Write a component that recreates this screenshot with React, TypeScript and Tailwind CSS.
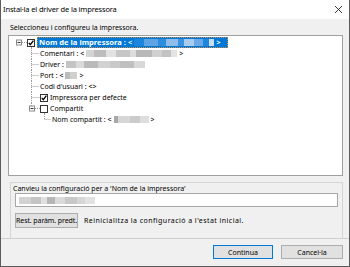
const FONT = "font-['Noto_Sans','Liberation_Sans',sans-serif]";

// pixelated "blurred" value blocks
function Blur({ parts }: { parts: string[] }) {
  return (
    <span className="inline-flex h-[7px] items-stretch">
      {parts.map((c, i) => (
        <span key={i} className={c} />
      ))}
    </span>
  );
}

const dot = { stroke: "#9a9a9a", strokeWidth: 1, strokeDasharray: "1 1" };

function ExpandBox({ x, y }: { x: number; y: number }) {
  return (
    <g>
      <rect x={x + 0.5} y={y + 0.5} width={5} height={5} fill="#fff" stroke="#8a8a8a" />
      <line x1={x + 1.5} y1={y + 3} x2={x + 4.5} y2={y + 3} stroke="#333" />
    </g>
  );
}

function Check({ x, checked }: { x: number; checked?: boolean }) {
  return (
    <g>
      <rect x={x + 0.5} y={2.5} width={7} height={7} fill="#fff" stroke="#333" />
      {checked && (
        <path d={`M${x + 1.8} ${5.8} L${x + 3.3} ${7.6} L${x + 6.4} ${3.6}`} fill="none" stroke="#000" strokeWidth={1.3} />
      )}
    </g>
  );
}

function Row({ guide, width, children }: { guide: React.ReactNode; width: number; children: React.ReactNode }) {
  return (
    <div className="flex h-[11px] items-center">
      <svg width={width} height={11} className="shrink-0">
        {guide}
      </svg>
      {children}
    </div>
  );
}

const V = 22.5;

export default function App() {
  return (
    <div className={`flex h-[267px] w-[350px] flex-col overflow-hidden border-x border-b border-[#5b5b5b] bg-[#f0f0f0] text-black ${FONT}`}>
      {/* title bar */}
      <div className="flex h-[19px] shrink-0 items-center justify-between bg-white pl-[2px] pr-[6px]">
        <span className="text-[7.5px] leading-none tracking-[-0.15px]">Instal·la el driver de la impressora</span>
        <svg width="9" height="9" viewBox="0 0 9 9">
          <path d="M1 1 L8 8 M8 1 L1 8" stroke="#222" strokeWidth="0.9" />
        </svg>
      </div>

      <div className="flex flex-col pl-[7px] pr-[6px]">
        <div className="flex h-[16px] items-center pl-[2px] text-[7px] leading-none">
          Seleccioneu i configureu la impressora.
        </div>

        {/* tree view */}
        <div className="h-[141px] border border-[#a0a0a0] bg-white pt-[1px] text-[7px] leading-none">
          <Row
            width={28}
            guide={
              <>
                <ExpandBox x={7} y={2.5} />
                <line x1={13} y1={5.5} x2={18} y2={5.5} {...dot} />
                <Check x={18} checked />
                <line x1={V} y1={10} x2={V} y2={11} {...dot} />
              </>
            }
          >
            <div className="flex h-[11px] w-[191px] items-center gap-[2px] border border-dotted border-[#d08b4a] bg-[#0078d7] pl-[1px] text-[7.6px] font-bold text-white">
              <span>Nom de la impressora : &lt;</span>
              <Blur parts={["w-[10px] bg-[#1c86dc]", "w-[14px] bg-[#5ea3e4]", "w-[8px] bg-[#2e8ddd]", "w-[12px] bg-[#8fbde9]", "w-[6px] bg-[#3a93df]", "w-[10px] bg-[#a9cbee]", "w-[9px] bg-[#6aa9e5]", "w-[6px] bg-[#1f87db]", "w-[5px] bg-[#c7dcf2]"]} />
              <span>&gt;</span>
            </div>
          </Row>

          <Row width={31} guide={<><line x1={V} y1={0} x2={V} y2={11} {...dot} /><line x1={V} y1={5.5} x2={30} y2={5.5} {...dot} /></>}>
            <span className="flex items-center gap-[2px]">
              Comentari : &lt;
              <Blur parts={["w-[8px] bg-[#d4d4d4]", "w-[12px] bg-[#bdbdbd]", "w-[10px] bg-[#e2e2e2]", "w-[14px] bg-[#c6c6c6]", "w-[6px] bg-[#dcdcdc]", "w-[16px] bg-[#b8b8b8]", "w-[10px] bg-[#d0d0d0]", "w-[9px] bg-[#c2c2c2]", "w-[6px] bg-[#e4e4e4]"]} />
              &gt;
            </span>
          </Row>

          <Row width={31} guide={<><line x1={V} y1={0} x2={V} y2={11} {...dot} /><line x1={V} y1={5.5} x2={30} y2={5.5} {...dot} /></>}>
            <span className="flex items-center gap-[2px]">
              Driver :
              <Blur parts={["w-[10px] bg-[#c4c4c4]", "w-[8px] bg-[#dadada]", "w-[14px] bg-[#bababa]", "w-[12px] bg-[#d2d2d2]", "w-[10px] bg-[#c8c8c8]", "w-[14px] bg-[#bfbfbf]", "w-[11px] bg-[#d8d8d8]"]} />
            </span>
          </Row>

          <Row width={31} guide={<><line x1={V} y1={0} x2={V} y2={11} {...dot} /><line x1={V} y1={5.5} x2={30} y2={5.5} {...dot} /></>}>
            <span className="flex items-center gap-[2px]">
              Port : &lt;
              <Blur parts={["w-[5px] bg-[#bcbcbc]", "w-[7px] bg-[#d0d0d0]"]} />
              &gt;
            </span>
          </Row>

          <Row width={31} guide={<><line x1={V} y1={0} x2={V} y2={11} {...dot} /><line x1={V} y1={5.5} x2={30} y2={5.5} {...dot} /></>}>
            <span>Codi d'usuari : &lt;&gt;</span>
          </Row>

          <Row
            width={41}
            guide={
              <>
                <line x1={V} y1={0} x2={V} y2={11} {...dot} />
                <line x1={V} y1={5.5} x2={31} y2={5.5} {...dot} />
                <Check x={31} checked />
              </>
            }
          >
            <span>Impressora per defecte</span>
          </Row>

          <Row
            width={41}
            guide={
              <>
                <line x1={V} y1={0} x2={V} y2={3} {...dot} />
                <ExpandBox x={20} y={2.5} />
                <line x1={26} y1={5.5} x2={31} y2={5.5} {...dot} />
                <Check x={31} />
                <line x1={35.5} y1={10} x2={35.5} y2={11} {...dot} />
              </>
            }
          >
            <span>Compartit</span>
          </Row>

          <Row width={43} guide={<><line x1={35.5} y1={0} x2={35.5} y2={5.5} {...dot} /><line x1={35.5} y1={5.5} x2={42} y2={5.5} {...dot} /></>}>
            <span className="flex items-center gap-[2px]">
              Nom compartit : &lt;
              <Blur parts={["w-[4px] bg-[#a8a8a8]", "w-[12px] bg-[#d6d6d6]", "w-[10px] bg-[#cbcbcb]", "w-[9px] bg-[#dedede]"]} />
              &gt;
            </span>
          </Row>
        </div>

        {/* settings group */}
        <div className="ml-[2px] mt-[6px] flex h-[56px] flex-col border-x border-t border-[#d5d5d5] text-[7px] leading-none">
          <div className="flex h-[10px] items-center pl-[2px]">Canvieu la configuració per a 'Nom de la impressora'</div>
          <div className="mx-[4px] flex h-[14px] items-center border border-[#a6a6a6] bg-white pl-[3px]">
            <Blur parts={["w-[12px] bg-[#d2d2d2]", "w-[10px] bg-[#c4c4c4]", "w-[6px] bg-[#e0e0e0]", "w-[8px] bg-[#b6b6b6]", "w-[10px] bg-[#dadada]", "w-[12px] bg-[#c8c8c8]", "w-[8px] bg-[#d6d6d6]", "w-[10px] bg-[#e2e2e2]"]} />
          </div>
          <div className="mx-[4px] mt-[6px] flex items-center gap-[6px]">
            <button className="flex h-[15px] w-[63px] items-center justify-center whitespace-nowrap border border-[#adadad] bg-[#e1e1e1] text-[7px] tracking-[-0.1px]">
              Rest. paràm. predt.
            </button>
            <span className="whitespace-nowrap tracking-[0.45px]">Reinicialitza la configuració a l'estat inicial.</span>
          </div>
        </div>
      </div>

      <div className="h-px shrink-0 bg-[#cfcfcf]" />

      {/* dialog buttons */}
      <div className="flex justify-end gap-[8px] pr-[6px] pt-[6px] text-[7px] leading-none">
        <button className="flex h-[14px] w-[60px] items-center justify-center border border-[#0078d7] bg-[#e1e1e1]">
          Continua
        </button>
        <button className="flex h-[14px] w-[62px] items-center justify-center border border-[#adadad] bg-[#e1e1e1]">
          Cancel·la
        </button>
      </div>
    </div>
  );
}
